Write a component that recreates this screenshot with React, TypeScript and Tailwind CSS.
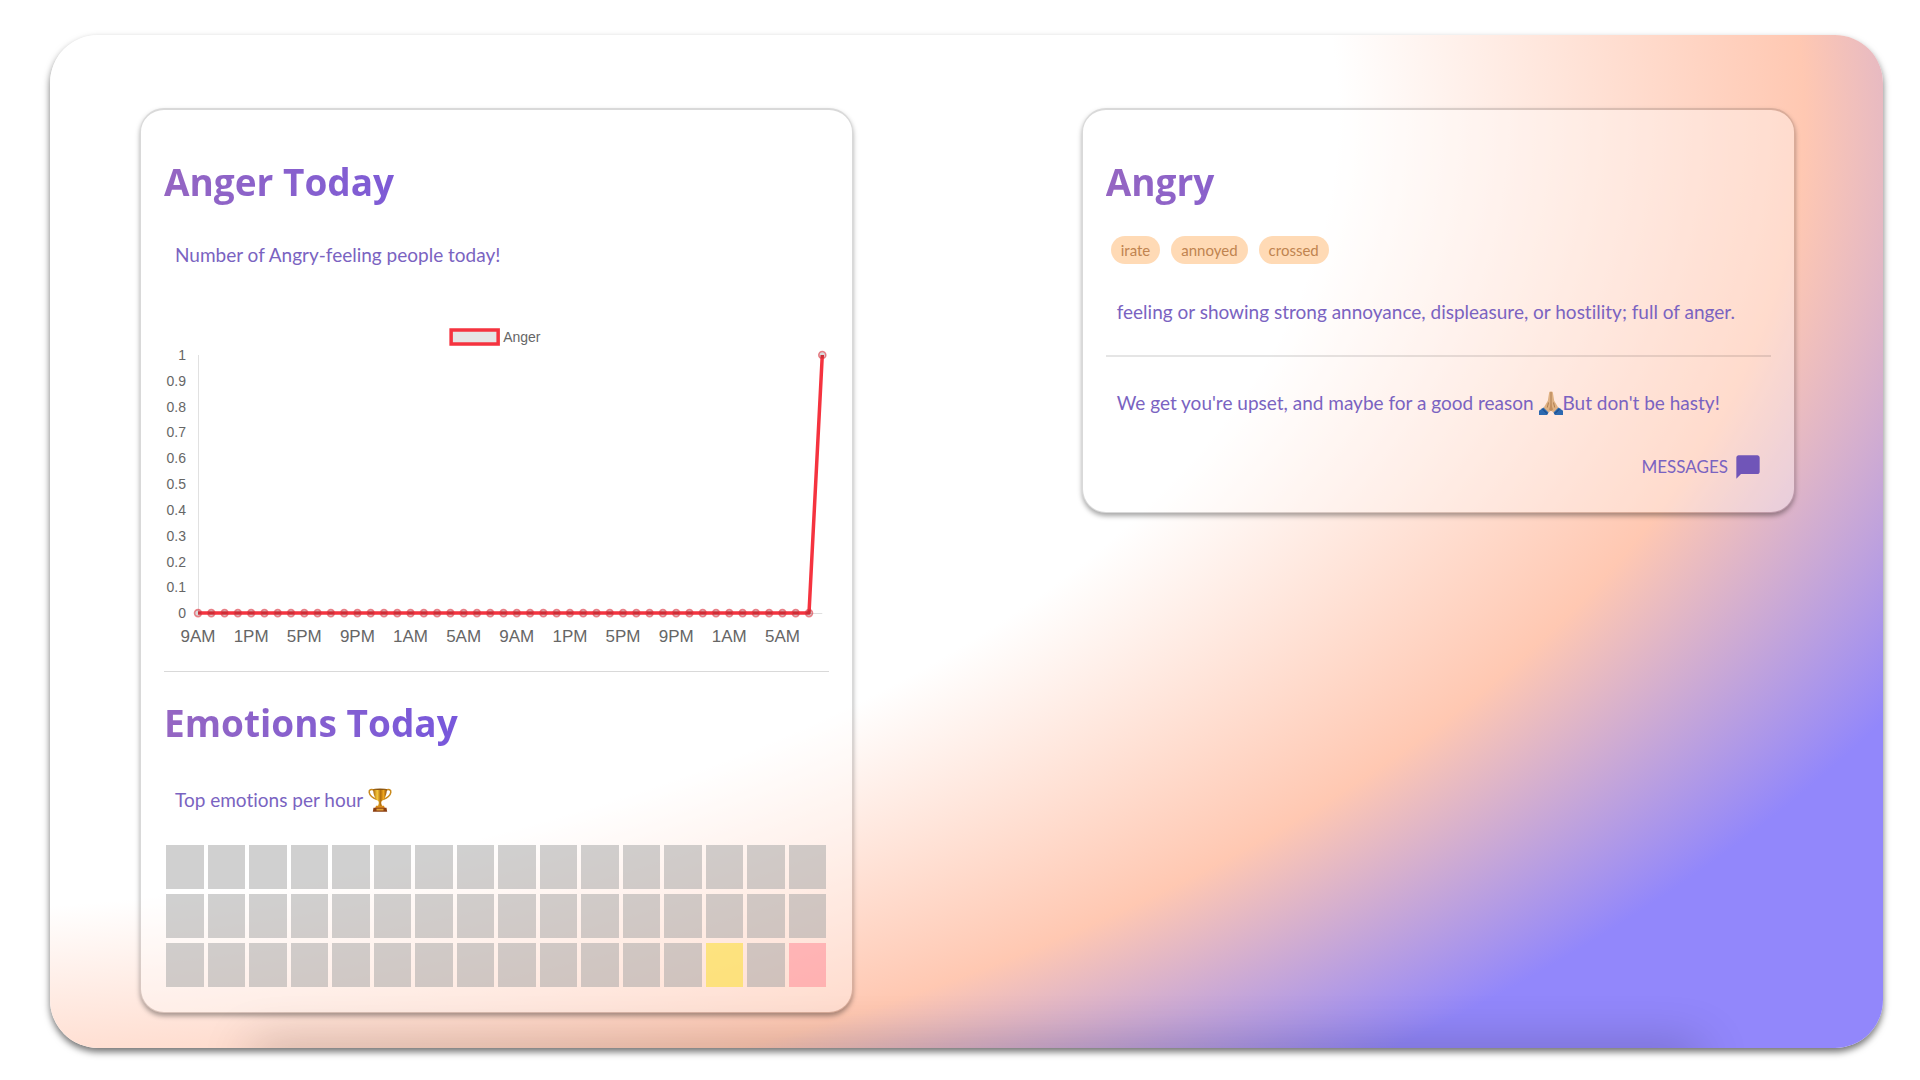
import React from 'react';
import { MdChatBubble } from 'react-icons/md';

const HOURS = ['9AM', '1PM', '5PM', '9PM', '1AM', '5AM'];
const POINT_COUNT = 48;
const angerCounts = Array.from({ length: POINT_COUNT }, (_, i) => (i === POINT_COUNT - 1 ? 1 : 0));

type Emotion = 'none' | 'happy' | 'angry';

const topEmotions: Emotion[] = Array.from({ length: 48 }, (_, i) => {
    if (i === 45) return 'happy';
    if (i === 47) return 'angry';
    return 'none';
});

const emotionColors: Record<Emotion, string> = {
    none: 'bg-[#a1a1a1]/50',
    happy: 'bg-[#fce055]/70',
    angry: 'bg-[#ff8c96]/55',
};

const Card: React.FC<{ children: React.ReactNode; className?: string }> = ({ children, className = '' }) => (
    <section
        className={`w-[43.1%] rounded-3xl border border-t-2 border-black/15 bg-white/35 bg-clip-padding px-[23px] pt-11 shadow-[0_3px_5px_rgba(0,0,0,0.35)] ${className}`}
    >
        {children}
    </section>
);

const Title: React.FC<{ children: React.ReactNode }> = ({ children }) => (
    <h2 className="bg-linear-to-r from-[#9566c2] to-[#7455df] to-50% bg-clip-text font-['Open_Sans',sans-serif] text-[37px] leading-[56px] font-bold text-transparent">
        {children}
    </h2>
);

const Text: React.FC<{ children: React.ReactNode; className?: string }> = ({ children, className = '' }) => (
    <p className={`ml-[11px] text-[19px] leading-7 text-[#7a63c1] ${className}`}>{children}</p>
);

const Trophy: React.FC = () => (
    <svg viewBox="0 0 24 24" className="inline-block size-6 align-[-5px]" role="img" aria-label="trophy">
        <defs>
            <linearGradient id="gold" x1="0" x2="1">
                <stop offset="0" stopColor="#a9650c" />
                <stop offset="0.3" stopColor="#f7c93c" />
                <stop offset="0.55" stopColor="#b06c0c" />
                <stop offset="0.75" stopColor="#f0a81f" />
                <stop offset="1" stopColor="#8f4f0a" />
            </linearGradient>
        </defs>
        <path d="M6.5 2.5C3 0.5 0.8 2 1.2 4.4 1.7 7.6 5 10 9 11.5" fill="none" stroke="#c98a1d" strokeWidth="1.5" />
        <path d="M17.5 2.5C21 0.5 23.2 2 22.8 4.4 22.3 7.6 19 10 15 11.5" fill="none" stroke="#c98a1d" strokeWidth="1.5" />
        <path d="M5.2 1h13.6c0 6-1.8 9.7-4.6 11.8-1 .8-1 1.7-.9 2.7l.9 2.7H9.8l.9-2.7c.1-1 .1-1.9-.9-2.7C7 10.7 5.2 7 5.2 1z" fill="url(#gold)" />
        <ellipse cx="12" cy="1.2" rx="6.8" ry="0.8" fill="#8a530e" />
        <path d="M8 17.8h8l.8 2.2H7.2z" fill="#d98a1b" />
        <path d="M5.5 19.8h13l.7 4H4.8z" fill="#8d3f12" />
        <rect x="8.5" y="20.7" width="7" height="1.8" fill="#e0a339" />
    </svg>
);

const PrayingHands: React.FC = () => (
    <svg viewBox="0 0 24 24" className="inline-block size-6 align-[-5px]" role="img" aria-label="folded hands">
        <path d="M10.2 1.2C10.6.2 11.6.2 12 .8c.4-.6 1.4-.6 1.8.4l1.4 8.6 4.3 7.2-4.7 4.8L12 19.5l-2.8 2.3L4.5 17l4.3-7.2z" fill="#dfb183" />
        <path d="M12 1v18.5M9.5 11.5l-1.2 5M14.5 11.5l1.2 5" fill="none" stroke="#a8764b" strokeWidth="0.9" />
        <path d="M12 12.5l-2 6 2 1.5 2-1.5z" fill="#c38f5f" />
        <path d="M4.5 16.5l5 5-1.3 2.5H0v-4.2z" fill="#2c69b0" />
        <path d="M19.5 16.5l-5 5 1.3 2.5H24v-4.2z" fill="#2c69b0" />
        <path d="M3.2 17.7l5 5M20.8 17.7l-5 5" stroke="#17427c" strokeWidth="1" />
    </svg>
);

const AngerChart: React.FC = () => {
    const left = 34;
    const right = 658;
    const top = 35;
    const bottom = 293;
    const step = (right - left) / (POINT_COUNT - 1);
    const points = angerCounts.map((value, i) => ({
        x: left + i * step,
        y: bottom - value * (bottom - top),
    }));

    return (
        <svg viewBox="0 0 665 340" className="block w-full font-['Liberation_Sans',sans-serif]" role="img" aria-label="Anger per hour">
            <rect x="287" y="10" width="47" height="14" fill="#e5e5e5" stroke="#f5333f" strokeWidth="3.5" />
            <text x="339" y="22" fontSize="14" fill="#666">Anger</text>
            <path d={`M${left + 0.5} ${top}V${bottom + 0.5}H${right}`} fill="none" stroke="#000" strokeOpacity="0.12" />
            {Array.from({ length: 11 }, (_, i) => (
                <text key={i} x="22" y={bottom + 5 - (i * (bottom - top)) / 10} fontSize="14" fill="#666" textAnchor="end">
                    {i / 10}
                </text>
            ))}
            {Array.from({ length: 12 }, (_, i) => (
                <text key={i} x={left + i * 4 * step} y="322" fontSize="17" fill="#666" textAnchor="middle">
                    {HOURS[i % HOURS.length]}
                </text>
            ))}
            <polyline points={points.map(p => `${p.x},${p.y}`).join(' ')} fill="none" stroke="#f5333f" strokeWidth="3.5" strokeLinejoin="round" />
            {points.map(p => (
                <circle key={p.x} cx={p.x} cy={p.y} r="3.5" fill="#000" fillOpacity="0.15" stroke="#e23440" strokeOpacity="0.6" strokeWidth="1.6" />
            ))}
        </svg>
    );
};

const App: React.FC = () => {
    return (
        <div className="min-h-screen bg-white pt-[35px] pr-[37px] pb-8 pl-[50px] font-['Lato','Noto_Sans',sans-serif] [font-variant-ligatures:none]">
            <main className="relative rounded-[48px] bg-[radial-gradient(127%_123%_at_-11%_8%,#ffffff_64%,#ffc8b2_84%,#9287fb_100%)] pt-[73px] pr-[88px] pb-[35px] pl-[90px] shadow-[0_4px_7px_rgba(0,0,0,0.55)]">
                {/* soft shade along the bottom edge */}
                <div className="pointer-events-none absolute inset-0 overflow-hidden rounded-[48px]">
                    <div className="absolute top-full right-[10%] left-[11%] h-6 shadow-[0_0_50px_rgba(0,0,0,0.3)]" />
                </div>

                <div className="relative flex items-start justify-between">
                    <Card className="pb-[25px]">
                        <Title>Anger Today</Title>
                        <Text className="mt-[31px] mb-[51px]">Number of Angry-feeling people today!</Text>
                        <AngerChart />
                        <hr className="mt-[11px] mb-[23px] border-black/15" />
                        <Title>Emotions Today</Title>
                        <Text className="mt-[35px] mb-[31px]">
                            Top emotions per hour <Trophy />
                        </Text>
                        <div className="mr-[3px] ml-0.5 grid grid-cols-16 gap-x-1 gap-y-[5px]">
                            {topEmotions.map((emotion, i) => (
                                <div key={i} className={`h-11 ${emotionColors[emotion]}`} />
                            ))}
                        </div>
                    </Card>

                    <Card className="pb-[31px]">
                        <Title>Angry</Title>
                        <ul className="mt-[26px] ml-[5px] flex gap-[11px] text-[15px] leading-7 text-[#c08450]">
                            {['irate', 'annoyed', 'crossed'].map(tag => (
                                <li key={tag} className="rounded-full bg-[#ffdab5] px-[10px]">{tag}</li>
                            ))}
                        </ul>
                        <Text className="mt-[34px]">
                            feeling or showing strong annoyance, displeasure, or hostility; full of anger.
                        </Text>
                        <hr className="mt-[29px] mb-8 border-t-2 border-black/10" />
                        <Text>
                            We get you're upset, and maybe for a good reason <PrayingHands />But don't be hasty!
                        </Text>
                        <button type="button" className="mt-9 mr-[9px] ml-auto flex items-center gap-1.5 text-[17px] leading-7 text-[#7a63c1]">
                            MESSAGES
                            <MdChatBubble className="size-7 text-[#7055b8]" />
                        </button>
                    </Card>
                </div>
            </main>
        </div>
    );
};

export default App;
